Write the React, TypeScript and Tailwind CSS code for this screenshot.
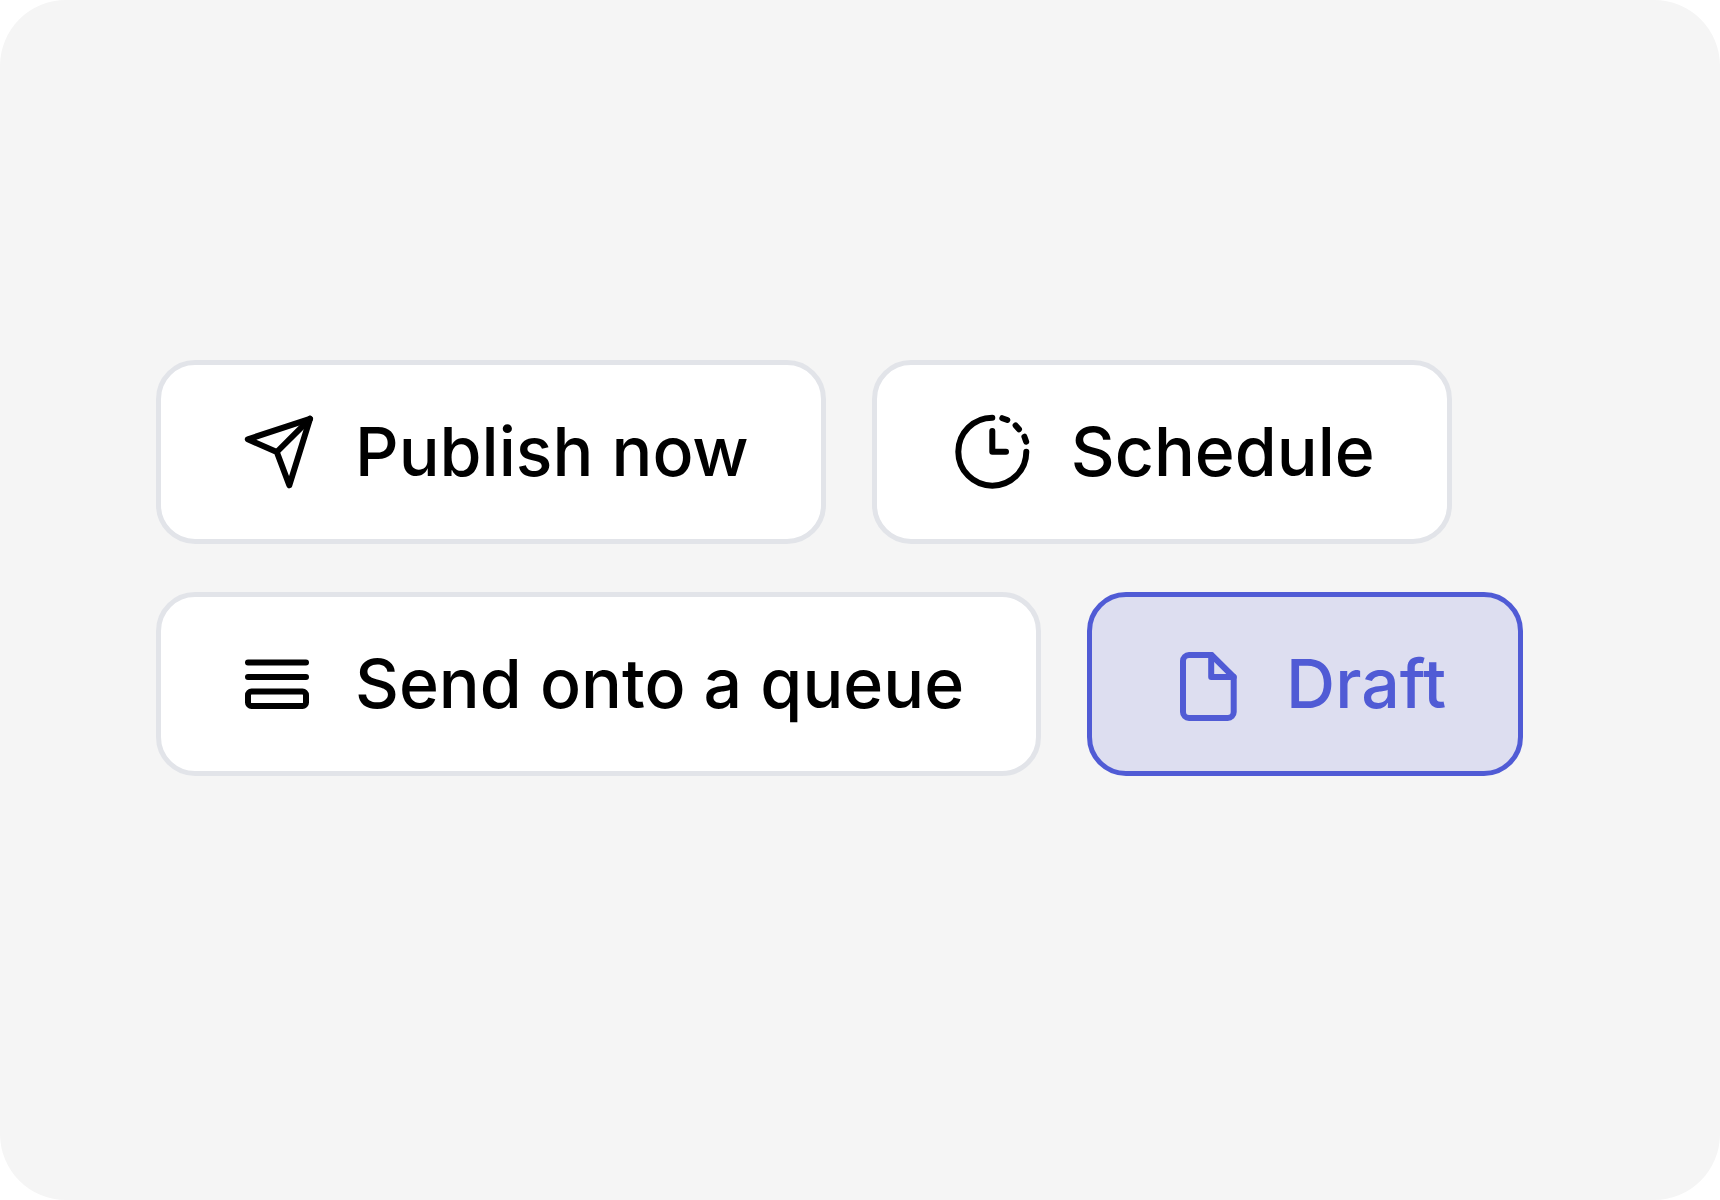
import React, { useState } from "react";
import clsx from "clsx";

const iconProps = {
    viewBox: "0 0 88 88",
    fill: "none",
    stroke: "currentColor",
    strokeWidth: 6,
    strokeLinecap: "round" as const,
    strokeLinejoin: "round" as const,
    className: "w-[88px] h-[88px] shrink-0",
    "aria-hidden": true,
};

const SendIcon = () => (
    <svg {...iconProps}>
        <path d="M77 10.8 14.8 31.3 43.8 44 56.3 77.3Z" />
        <path d="M77 10.8 43.8 44" />
    </svg>
);

const ScheduleIcon = () => (
    <svg {...iconProps}>
        <path d="M43.3 9.7A34 34 0 1 0 77.3 43.7" />
        <path d="M43.3 23v20.7H57" />
        <path d="M53.3 10.2 58.3 12M66.6 17.4 70 21.2M75.4 28.7 77.2 33.7" />
    </svg>
);

const QueueIcon = () => (
    <svg {...iconProps}>
        <path d="M15 22.4H73M15 37H73" />
        <rect x="15" y="51.5" width="58" height="14.5" rx="3.5" />
    </svg>
);

const DraftIcon = () => (
    <svg {...iconProps}>
        <path d="M47.5 15H25a6 6 0 0 0-6 6V72a6 6 0 0 0 6 6H63.7a6 6 0 0 0 6-6V37Z" />
        <path d="M47.2 15V37H69.7" />
    </svg>
);

const options = [
    { id: "publish", label: "Publish now", icon: SendIcon },
    { id: "schedule", label: "Schedule", icon: ScheduleIcon },
    { id: "queue", label: "Send onto a queue", icon: QueueIcon },
    { id: "draft", label: "Draft", icon: DraftIcon },
];

export default function App() {
    const [selected, setSelected] = useState("draft");

    return (
        <div className="bg-white font-['Inter',sans-serif]">
            <main className="min-h-screen rounded-[66px] bg-[#f5f5f5] px-[156px] pt-[360px] pb-20">
                <div className="flex flex-wrap gap-x-[46px] gap-y-12">
                    {options.map(({ id, label, icon: Icon }) => (
                        <button
                            key={id}
                            type="button"
                            aria-pressed={selected === id}
                            onClick={() => setSelected(id)}
                            className={clsx(
                                "flex items-center gap-[34px] rounded-[39px] border-5 px-[72px] py-[43px] text-[68px] leading-[86px] font-medium whitespace-nowrap cursor-pointer",
                                selected === id
                                    ? "border-[#505bd5] bg-[#dddef0] text-[#505bd5]"
                                    : "border-[#e2e4e9] bg-white text-black"
                            )}
                        >
                            <Icon />
                            <span className="pb-0.5">{label}</span>
                        </button>
                    ))}
                </div>
            </main>
        </div>
    );
}
